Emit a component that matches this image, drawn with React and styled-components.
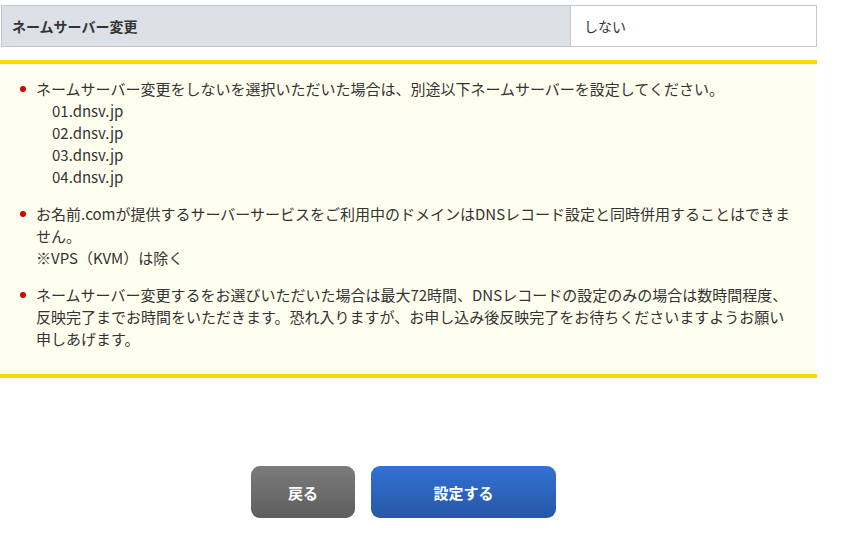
import React from "react";
import styled, { createGlobalStyle } from "styled-components";

const GlobalStyle = createGlobalStyle`
  body {
    margin: 0;
    background: #fff;
    font-family: "Noto Sans CJK JP", "Noto Sans", sans-serif;
    color: #333;
  }
`;

const Page = styled.div`
  width: 816px;
  padding: 5px 0 0 1px;
`;

const SettingTable = styled.div`
  display: grid;
  grid-template-columns: 569px 1fr;
  border: 1px solid #c4c7cc;
  height: 40px;
`;

const HeadCell = styled.div`
  background: #dce0e7;
  border-right: 1px solid #c4c7cc;
  display: flex;
  align-items: center;
  padding-left: 10px;
  font-size: 14px;
  font-weight: bold;
  color: #333;
`;

const ValueCell = styled.div`
  display: flex;
  align-items: center;
  padding-left: 13px;
  font-size: 14px;
  color: #333;
`;

const Notice = styled.div`
  margin: 13px 0 0 -1px;
  background: #fffff0;
  border-top: 4px solid #ffd800;
  border-bottom: 4px solid #ffd800;
  padding: 14px 14px 24px 20px;
`;

const List = styled.ul`
  list-style: none;
  margin: 0;
  padding: 0;
  display: flex;
  flex-direction: column;
  gap: 15px;
`;

const Item = styled.li`
  position: relative;
  padding-left: 16px;
  font-size: 15px;
  line-height: 22px;

  &::before {
    content: "";
    position: absolute;
    left: 0;
    top: 8px;
    width: 6px;
    height: 6px;
    border-radius: 50%;
    background: #d40000;
  }
`;

const Servers = styled.div`
  padding-left: 16px;
`;

const ButtonRow = styled.div`
  display: flex;
  justify-content: center;
  gap: 16px;
  margin-top: 88px;
  padding-right: 11px;
`;

const Button = styled.button`
  height: 52px;
  width: ${(p) => p.$width}px;
  border: none;
  border-radius: 9px;
  font-family: inherit;
  font-size: 15px;
  font-weight: bold;
  color: #fff;
  cursor: pointer;
  background: ${(p) =>
    p.$primary
      ? "linear-gradient(#3072d3, #2858a6)"
      : "linear-gradient(#7b7b7b, #5e5e5e)"};
`;

export default function App() {
  return (
    <>
      <GlobalStyle />
      <Page>
        <SettingTable>
          <HeadCell>ネームサーバー変更</HeadCell>
          <ValueCell>しない</ValueCell>
        </SettingTable>
        <Notice>
          <List>
            <Item>
              ネームサーバー変更をしないを選択いただいた場合は、別途以下ネームサーバーを設定してください。
              <Servers>
                01.dnsv.jp
                <br />
                02.dnsv.jp
                <br />
                03.dnsv.jp
                <br />
                04.dnsv.jp
              </Servers>
            </Item>
            <Item>
              お名前.comが提供するサーバーサービスをご利用中のドメインはDNSレコード設定と同時併用することはできません。
              <br />
              ※VPS（KVM）は除く
            </Item>
            <Item>
              ネームサーバー変更するをお選びいただいた場合は最大72時間、DNSレコードの設定のみの場合は数時間程度、
              <br />
              反映完了までお時間をいただきます。恐れ入りますが、お申し込み後反映完了をお待ちくださいますようお願い
              <br />
              申しあげます。
            </Item>
          </List>
        </Notice>
        <ButtonRow>
          <Button $width={104}>戻る</Button>
          <Button $width={185} $primary>
            設定する
          </Button>
        </ButtonRow>
      </Page>
    </>
  );
}
